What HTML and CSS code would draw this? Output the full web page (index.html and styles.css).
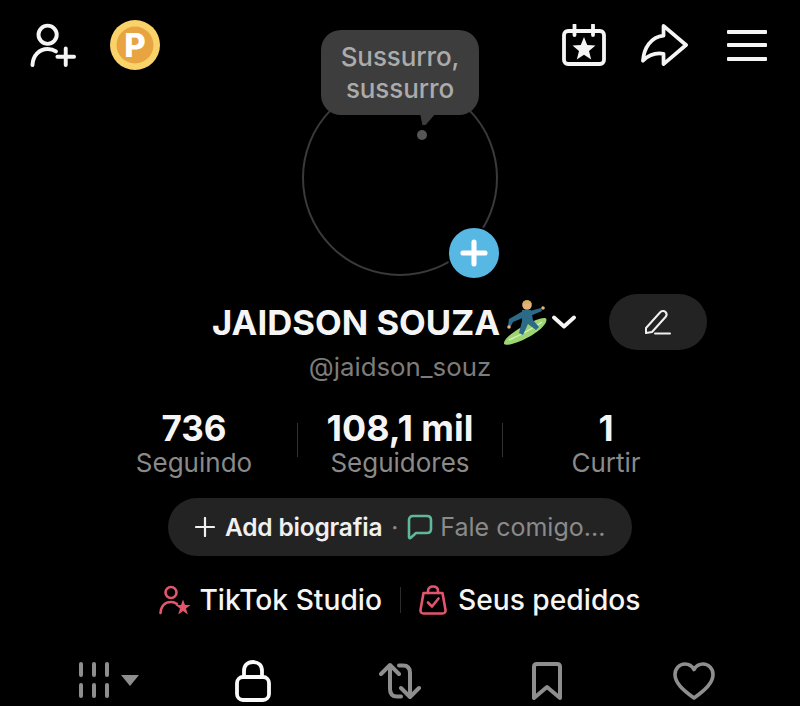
FILE: index.html
```html
<!DOCTYPE html>
<html lang="pt-BR">
<head>
<meta charset="utf-8">
<title>Perfil</title>
<link rel="stylesheet" href="styles.css">
</head>
<body>
<main class="page">
  <header class="topbar">
    <div class="top-left">
      <svg class="ic-person" viewBox="0 0 48 48" fill="none" stroke="#f5f5f5" stroke-width="4" stroke-linecap="round"><circle cx="18" cy="13" r="9.300"/><path d="M2.500 44C3 34 9.500 27.500 18 27.500C21 27.500 24 28.300 26.500 30"/><path d="M28 35.500H45M36.500 27V44"/></svg>
      <svg class="ic-coin" viewBox="0 0 50 50"><circle cx="25" cy="25" r="25" fill="#f9d369"/><circle cx="25" cy="25" r="18.500" fill="#e8a440"/><text x="25" y="36.500" text-anchor="middle" class="coin-p">P</text></svg>
    </div>
    <div class="top-right">
      <svg class="ic-cal" viewBox="0 0 44 42" fill="none" stroke="#f5f5f5" stroke-width="3.800"><rect x="2" y="7" width="40" height="33" rx="4"/><path d="M12.500 1V11M31 1V11" stroke-linecap="round"/><path d="M22 13L25.200 21L33.500 21.500L27 27L29.200 35.500L22 30.800L14.800 35.500L17 27L10.500 21.500L18.800 21Z" fill="#f5f5f5" stroke="none"/></svg>
      <svg class="ic-share" viewBox="0 0 48 44" fill="none" stroke="#f5f5f5" stroke-width="3.800" stroke-linejoin="round"><path d="M23 2.500L46 22L23 41.500V31C14 29.500 8 32 2 38C3 25 10 14 23 12.500Z"/></svg>
      <div class="ic-menu"><span></span><span></span><span></span></div>
    </div>
  </header>

  <section class="avatar-wrap">
    <div class="avatar-ring"></div>
    <div class="whisper">Sussurro,<br>sussurro<i class="whisper-tail"></i></div>
    <i class="whisper-dot"></i>
    <div class="add-btn"><svg viewBox="0 0 50 50" stroke="#fff" stroke-width="5.500" stroke-linecap="round"><path d="M25 13V37M13 25H37"/></svg></div>
  </section>

  <section class="name-row">
    <h1 class="name">JAIDSON SOUZA</h1>
    <svg class="surfer" viewBox="0 0 48 46" aria-label="surfista">
      <path d="M4 45C3 39 18 29 36 21C44 18 48 18 46 23C43 31 24 42 12 45C8 46 5 46 4 45Z" fill="#9bd672"/>
      <path d="M9 41C18 37 32 30 42 23" stroke="#d7efb7" stroke-width="1.500" fill="none"/>
      <circle cx="27" cy="6" r="4.800" fill="#e5b27a"/>
      <path d="M22.500 5C23 0 31 0 31.500 5Z" fill="#d9b25c"/>
      <path d="M22 11L31 11L33 21L39 28L36 31L28 25L23 36L19 34L22 22Z" fill="#2c6a88"/>
      <path d="M23 12L9 20L8 27L11 27L13 23L25 18ZM30 12L41 9L42 12L30 17Z" fill="#2c6a88"/>
      <circle cx="9" cy="28" r="1.800" fill="#e5b27a"/><circle cx="43" cy="9" r="1.800" fill="#e5b27a"/>
    </svg>
    <svg class="chev" viewBox="0 0 26 14" fill="none" stroke="#f5f5f5" stroke-width="3.800" stroke-linecap="round" stroke-linejoin="round"><path d="M3 2.500L13 11.500L23 2.500"/></svg>
    <button class="edit-btn" type="button" aria-label="Editar">
      <svg viewBox="0 0 28 26" fill="none" stroke="#f0f0f0" stroke-width="2" stroke-linejoin="round" stroke-linecap="round"><path d="M2 19L16 3.500C17.500 1.800 20 1.500 21.500 3C23 4.500 22.800 6.500 21.500 8L8 23L2 24Z"/><path d="M11 24.500H26"/></svg>
    </button>
  </section>

  <p class="handle">@jaidson_souz</p>

  <section class="stats">
    <div class="stat"><strong>736</strong><span>Seguindo</span></div>
    <div class="stat stat-mid"><strong>108,1 mil</strong><span>Seguidores</span></div>
    <div class="stat"><strong>1</strong><span>Curtir</span></div>
  </section>

  <div class="bio-wrap">
    <div class="bio">
      <svg class="ic-plus" viewBox="0 0 20 20" stroke="#f0f0f0" stroke-width="2.200" stroke-linecap="round"><path d="M10 1V19M1 10H19"/></svg>
      <span class="bio-add">Add biografia</span>
      <span class="bio-dot">·</span>
      <svg class="ic-chat" viewBox="0 0 26 26" fill="none" stroke="#5fb899" stroke-width="2.600" stroke-linejoin="round"><path d="M2 6C2 3.500 3.500 2 6 2H20C22.500 2 24 3.500 24 6V15C24 17.500 22.500 19 20 19H9L3.500 24C2.800 24.500 2 24 2 23Z"/></svg>
      <span class="bio-fale">Fale comigo...</span>
    </div>
  </div>

  <nav class="links">
    <a class="link">
      <svg class="ic-studio" viewBox="0 0 32 30" fill="none" stroke="#e2566d" stroke-width="2.600" stroke-linecap="round"><circle cx="12" cy="7.500" r="5.500"/><path d="M1.500 28C2 21 6 17 12 17C14 17 16 17.500 18 19"/><path d="M24 14.500L26 20H31.500L27 23.500L28.800 29.500L24 26L19.200 29.500L21 23.500L16.500 20H22Z" fill="#e2566d" stroke="none"/></svg>
      <span>TikTok Studio</span>
    </a>
    <i class="link-sep"></i>
    <a class="link">
      <svg class="ic-bag" viewBox="0 0 28 30" fill="none" stroke="#e2566d" stroke-width="2.600" stroke-linejoin="round" stroke-linecap="round"><path d="M4.500 8H23.500L26.500 25C26.800 27 25.500 28.500 23.500 28.500H4.500C2.500 28.500 1.200 27 1.500 25Z"/><path d="M9 8V6C9 3 11 1.500 14 1.500C17 1.500 19 3 19 6V8"/><path d="M9 17.500L13 21.500L19.500 13.500"/></svg>
      <span>Seus pedidos</span>
    </a>
  </nav>

  <nav class="tabs">
    <div class="tab tab-grid">
      <svg class="ic-grid" viewBox="0 0 30 36" stroke="#8e8e8e" stroke-width="4" stroke-linecap="round"><path d="M2 2V13M15 2V13M28 2V13M2 23V34M15 23V34M28 23V34"/></svg>
      <svg class="ic-caret" viewBox="0 0 18 11" fill="#8e8e8e"><path d="M0 0H18L9 11Z"/></svg>
    </div>
    <div class="tab">
      <svg class="ic-lock" viewBox="0 0 36 42" fill="none" stroke="#fafafa" stroke-width="3.800"><rect x="2" y="17" width="32" height="23" rx="6"/><path d="M9 17V11C9 5.500 12.500 2 18 2C23.500 2 27 5.500 27 11V17"/></svg>
    </div>
    <div class="tab">
      <svg class="ic-repost" viewBox="0 0 42 38" fill="none" stroke="#8e8e8e" stroke-width="4" stroke-linecap="round" stroke-linejoin="round"><path d="M11 4V27C11 32 13.500 34.500 18 34.500H22"/><path d="M2 12L11 3L20 12"/><path d="M31 34V11C31 6 28.500 3.500 24 3.500H20"/><path d="M22 26L31 35L40 26"/></svg>
    </div>
    <div class="tab">
      <svg class="ic-book" viewBox="0 0 30 38" fill="none" stroke="#8e8e8e" stroke-width="4" stroke-linejoin="round"><path d="M2 5C2 3 3 2 5 2H25C27 2 28 3 28 5V36L15 25L2 36Z"/></svg>
    </div>
    <div class="tab">
      <svg class="ic-heart" viewBox="0 0 42 38" fill="none" stroke="#8e8e8e" stroke-width="3.600" stroke-linejoin="round"><path d="M21 36C10 28 2 21 2 12.500C2 6.500 6.500 2 12 2C15.500 2 19 4 21 7.500C23 4 26.500 2 30 2C35.500 2 40 6.500 40 12.500C40 21 32 28 21 36Z"/></svg>
    </div>
  </nav>
</main>
</body>
</html>
```
FILE: styles.css
```css
* { box-sizing: border-box; }
html, body { margin: 0; padding: 0; background: #000; }
.page {
  width: 800px;
  height: 706px;
  overflow: hidden;
  background: #000;
  color: #f5f5f5;
  font-family: Inter, "Liberation Sans", sans-serif;
  display: flex;
  flex-direction: column;
}
.topbar {
  height: 80px;
  flex: none;
  display: flex;
  justify-content: space-between;
  padding: 20px 33px 0 30px;
}
.top-left, .top-right { display: flex; align-items: center; height: 50px; }
.top-left { gap: 33px; }
.top-right { gap: 35px; }
.ic-person { width: 47px; height: 47px; }
.ic-coin { width: 50px; height: 50px; }
.coin-p { font: 800 33px Inter, sans-serif; fill: #fff; }
.ic-cal { width: 44px; height: 42px; }
.ic-share { width: 47px; height: 44px; margin-right: 4px; }
.ic-menu { width: 40px; display: flex; flex-direction: column; gap: 9.500px; }
.ic-menu span { display: block; height: 4px; background: #f5f5f5; border-radius: 1px; }

.avatar-wrap { position: relative; width: 196px; height: 196px; margin: 0 auto; flex: none; }
.avatar-ring { width: 196px; height: 196px; border: 2px solid #3a3a3a; border-radius: 50%; }
.whisper {
  position: absolute;
  left: 19px;
  top: -50px;
  width: 158px;
  height: 85px;
  padding-top: 11px;
  border-radius: 20px;
  background: #3d3d3d;
  color: #ababab;
  font-size: 26px;
  line-height: 32px;
  font-weight: 500;
  letter-spacing: -0.1px;
  text-align: center;
}
.whisper-tail {
  position: absolute;
  left: 99px;
  top: 83px;
  width: 16px;
  height: 12px;
  background: #3d3d3d;
  clip-path: polygon(0 0, 100% 0, 35% 100%, 15% 100%);
}
.whisper-dot {
  position: absolute;
  left: 115px;
  top: 50px;
  width: 10px;
  height: 10px;
  border-radius: 50%;
  background: #565656;
}
.add-btn {
  position: absolute;
  left: 145px;
  top: 146px;
  width: 54px;
  height: 54px;
  padding: 2px;
  border-radius: 50%;
  background: #58b8e4;
  border: 2px solid #000;
}
.add-btn svg { display: block; width: 46px; height: 46px; }

.name-row {
  display: flex;
  align-items: center;
  height: 56px;
  margin-top: 18px;
  padding-left: 212px;
  flex: none;
}
.name { margin: 0; font-size: 34.700px; font-weight: 700; line-height: 56px; letter-spacing: 0; white-space: nowrap; }
.surfer { width: 48px; height: 46px; margin-right: 3px; flex: none; }
.chev { width: 26px; height: 14px; flex: none; }
.edit-btn {
  width: 98px;
  height: 56px;
  margin-left: 32px;
  padding: 0;
  border: 0;
  border-radius: 28px;
  background: #232323;
  display: flex;
  align-items: center;
  justify-content: center;
  flex: none;
}
.edit-btn svg { width: 28px; height: 26px; }

.handle { margin: 1px 0 0; text-align: center; color: #7c7c7c; font-size: 25.800px; line-height: 32px; }

.stats { display: grid; grid-template-columns: 206px 206px 206px; justify-content: center; margin-top: 25px; }
.stat { display: flex; flex-direction: column; align-items: center; }
.stat strong { font-size: 35px; font-weight: 700; line-height: 40px; }
.stat span { font-size: 26px; line-height: 30px; color: #8a8a8a; }
.stat-mid { position: relative; }
.stat-mid strong { font-size: 35.800px; }
.stat-mid::before, .stat-mid::after {
  content: "";
  position: absolute;
  top: 15px;
  width: 1px;
  height: 34px;
  background: #333;
}
.stat-mid::before { left: 0; }
.stat-mid::after { right: 0; }

.bio-wrap { display: flex; justify-content: center; margin-top: 20px; }
.bio {
  width: 464px;
  height: 58px;
  border-radius: 29px;
  background: #232323;
  display: flex;
  align-items: center;
  padding-left: 27px;
  font-size: 24.500px;
  white-space: nowrap;
}
.ic-plus { width: 20px; height: 20px; margin-right: 10px; }
.bio-add { font-weight: 600; color: #f0f0f0; letter-spacing: -0.200px; }
.bio-dot { color: #8a8a8a; margin: 0 9px; }
.ic-chat { width: 26px; height: 26px; margin-right: 7px; }
.bio-fale { color: #8a8a8a; font-size: 25px; }

.links { display: flex; align-items: center; justify-content: center; height: 40px; margin-top: 24px; }
.link { display: flex; align-items: center; font-size: 28.200px; font-weight: 500; color: #f5f5f5; white-space: nowrap; }
.ic-studio { width: 32px; height: 30px; margin-right: 8px; }
.ic-bag { width: 28px; height: 30px; margin-right: 11px; }
.link-sep { width: 1px; height: 26px; background: #2b2b2b; margin: 0 18px; }

.tabs {
  display: grid;
  grid-template-columns: 147px 147px 147px 147px 147px;
  justify-content: center;
  margin-top: 42px;
  flex: none;
}
.tab { display: flex; justify-content: center; align-items: flex-start; height: 44px; }
.tab-grid { gap: 12px; padding-left: 5px; }
.ic-grid { width: 30px; height: 36px; }
.ic-caret { width: 18px; height: 11px; margin-top: 13px; }
.ic-lock { width: 36px; height: 42px; margin-top: -2px; }
.ic-repost { width: 42px; height: 38px; }
.ic-book { width: 30px; height: 38px; }
.ic-heart { width: 42px; height: 38px; }
```
